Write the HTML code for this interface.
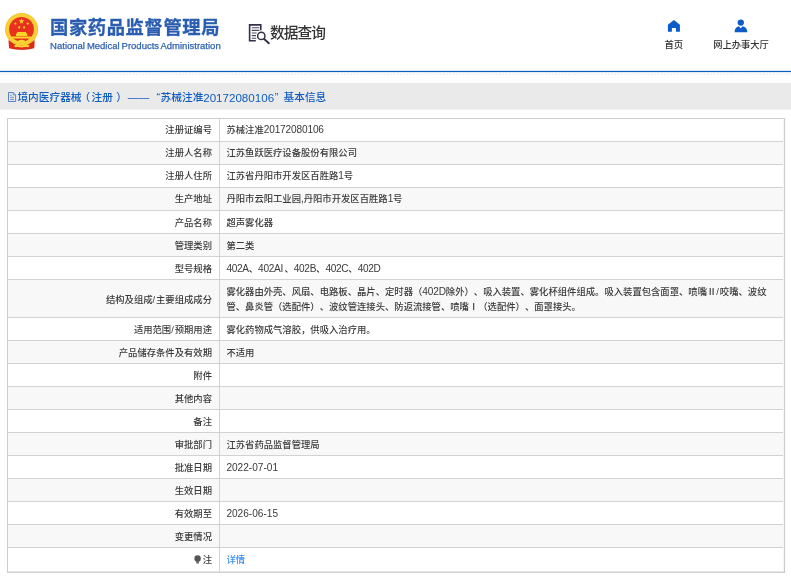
<!DOCTYPE html>
<html lang="zh-CN">
<head>
<meta charset="utf-8">
<title>国家药品监督管理局 数据查询</title>
<style>
html,body{margin:0;padding:0;background:#fff;}
body{width:791px;height:581px;position:relative;overflow:hidden;font-family:"Liberation Sans","Noto Sans CJK SC",sans-serif;color:#3a3a3a;text-spacing-trim:space-all;}
#bg{position:absolute;left:0;top:0;width:791px;height:581px;}
#txt{position:absolute;left:0;top:0;width:791px;height:581px;will-change:transform;opacity:0.999;}
.abs{position:absolute;white-space:nowrap;}
#t1{left:50.1px;top:13.6px;font-size:18.3px;line-height:28px;font-weight:bold;color:#2a5db0;letter-spacing:0.6px;-webkit-text-stroke:0.3px #2a5db0;}
#t2{left:50.1px;top:39.6px;font-size:9.5px;line-height:12px;color:#2f62b3;word-spacing:-0.7px;-webkit-text-stroke:0.25px #2f62b3;}
#q{left:270px;top:22px;font-size:14.7px;letter-spacing:-0.9px;line-height:22px;color:#333;font-weight:500;}
#h1{left:653.8px;width:40px;text-align:center;top:37.8px;font-weight:500;font-size:9.4px;line-height:14px;color:#333;}
#h2{left:700.5px;width:81px;text-align:center;top:37.6px;font-weight:500;font-size:9.25px;line-height:14px;color:#333;}
#tt{left:0;top:83.5px;width:400px;height:27px;line-height:27px;font-size:10.7px;color:#0f5cc2;font-weight:500;}
.tp{position:absolute;top:0;white-space:nowrap;}
.n2{font-size:11.6px;letter-spacing:0px;}
.r,.r2{position:absolute;left:8px;width:776px;font-size:9.34px;font-weight:500;}
.r .l,.r2 .l{position:absolute;left:0;top:0;width:204px;text-align:right;white-space:nowrap;}
.r .v,.r2 .v{position:absolute;left:218.4px;top:0;white-space:nowrap;}
.r .l,.r .v{line-height:22px;height:22px;margin-top:1px;}
.u .l,.u .v{margin-top:0;}
.r2 .l{line-height:37px;margin-top:2px;}
.r2 .v{line-height:15px;top:4px;}
.n{font-size:10.1px;letter-spacing:-0.15px;}
.d{letter-spacing:0px;}
.m{letter-spacing:-0.3px;}
.sl{letter-spacing:0.9px;}
.lnk{color:#3c8cf5;}
</style>
</head>
<body>
<svg id="bg" width="791" height="581" viewBox="0 0 791 581">
<rect x="0" y="70.85" width="791" height="1.25" fill="#0b5ec0"/>
<defs><pattern id="hatch" width="3.3" height="3.3" patternUnits="userSpaceOnUse"><path d="M0.3 3 L2.6 0.7" stroke="#d6d6d6" stroke-width="0.7" fill="none"/></pattern></defs>
<rect x="0" y="72.2" width="791" height="3" fill="url(#hatch)"/>
<rect x="0" y="83" width="791" height="26.2" fill="#eaeaea"/>
<rect x="0" y="109.2" width="791" height="0.9" fill="#eef0f6"/>
<rect x="8" y="142" width="775" height="22" fill="#f8f8f8"/>
<rect x="8" y="188" width="775" height="22" fill="#f8f8f8"/>
<rect x="8" y="234" width="775" height="22" fill="#f8f8f8"/>
<rect x="8" y="280" width="775" height="37" fill="#f8f8f8"/>
<rect x="8" y="341" width="775" height="22" fill="#f8f8f8"/>
<rect x="8" y="387" width="775" height="22" fill="#f8f8f8"/>
<rect x="8" y="433" width="775" height="22" fill="#f8f8f8"/>
<rect x="8" y="479" width="775" height="22" fill="#f8f8f8"/>
<rect x="8" y="525" width="775" height="22" fill="#f8f8f8"/>
<rect x="7" y="118" width="778" height="1" fill="#cdcdcd"/>
<rect x="8" y="141" width="775" height="1" fill="#d2d2d2"/>
<rect x="8" y="164" width="775" height="1" fill="#d2d2d2"/>
<rect x="8" y="187" width="775" height="1" fill="#d2d2d2"/>
<rect x="8" y="210" width="775" height="1" fill="#d2d2d2"/>
<rect x="8" y="233" width="775" height="1" fill="#d2d2d2"/>
<rect x="8" y="256" width="775" height="1" fill="#d2d2d2"/>
<rect x="8" y="279" width="775" height="1" fill="#d2d2d2"/>
<rect x="8" y="317" width="775" height="1" fill="#d2d2d2"/>
<rect x="8" y="340" width="775" height="1" fill="#d2d2d2"/>
<rect x="8" y="363" width="775" height="1" fill="#d2d2d2"/>
<rect x="8" y="386" width="775" height="1" fill="#d2d2d2"/>
<rect x="8" y="409" width="775" height="1" fill="#d2d2d2"/>
<rect x="8" y="432" width="775" height="1" fill="#d2d2d2"/>
<rect x="8" y="455" width="775" height="1" fill="#d2d2d2"/>
<rect x="8" y="478" width="775" height="1" fill="#d2d2d2"/>
<rect x="8" y="501" width="775" height="1" fill="#d2d2d2"/>
<rect x="8" y="524" width="775" height="1" fill="#d2d2d2"/>
<rect x="8" y="547" width="775" height="1" fill="#d2d2d2"/>
<rect x="7" y="571.5" width="778.1" height="1.4" fill="#cdcdcd"/>
<rect x="7" y="118" width="1" height="454.9" fill="#cdcdcd"/>
<rect x="783.8" y="118" width="1.3" height="454.9" fill="#cdcdcd"/>
<rect x="219" y="119" width="1" height="452.5" fill="#d2d2d2"/>
<!-- emblem -->
<g id="emblem">
<path d="M8.5 40 L14 43 Q21.6 46.5 29.4 43 L34.6 40 L34.2 48.2 Q21.6 51.2 9 48.2 Z" fill="#de2a1a"/>
<circle cx="21.6" cy="29.4" r="16.5" fill="#f5c02a"/>
<circle cx="21.6" cy="29.4" r="15.6" fill="#f8cf35"/>
<circle cx="21.5" cy="29.3" r="12.4" fill="#e8321d"/>
<path d="M9 41.5 Q21.6 50 34.2 41.5 L34.2 47 Q21.6 52 9 47 Z" fill="#de2a1a"/>
<path d="M10.5 39 Q21.6 48.4 32.7 39 L31.6 37.8 Q21.6 45.6 11.6 37.8 Z" fill="#f8cf35"/>
<polygon points="21.5,18.2 22.2,20.3 24.4,20.3 22.6,21.6 23.3,23.7 21.5,22.4 19.7,23.7 20.4,21.6 18.6,20.3 20.8,20.3" fill="#f9d52a"/>
<circle cx="15.4" cy="23.6" r="1.05" fill="#f9d52a"/><circle cx="27.7" cy="23.6" r="1.05" fill="#f9d52a"/>
<circle cx="19.2" cy="27.4" r="1.05" fill="#f9d52a"/><circle cx="24.1" cy="27.4" r="1.05" fill="#f9d52a"/>
<path d="M17.4 32 H25.8 L26.6 33.5 H27.3 V36 H16 V33.5 H16.7 Z" fill="#f9d52a"/>
<rect x="11.8" y="36.5" width="19.6" height="2" rx="0.6" fill="#f9d52a"/>
<ellipse cx="21.6" cy="41.4" rx="3.6" ry="1.7" fill="#f8cf35"/>
<path d="M14 45.2 Q17.8 44 21.6 45.6 Q25.4 44 29.6 45.2 L28.6 47.2 Q25 46.4 21.6 47.6 Q18.2 46.4 15 47.2 Z" fill="#f8cf35"/>
</g>
<!-- search doc icon -->
<g id="qicon" fill="none" stroke="#33314a">
<path d="M260.8 30.2 V24.9 H249.6 V40.8 H255.8" stroke-width="1.6"/>
<path d="M251.7 27.7 H259.4 M251.7 30.4 H259.4 M251.7 33 H256.6 M251.7 35.6 H256 M251.7 38.2 H256.2" stroke-width="1.1" stroke="#4a485f"/>
<circle cx="261.3" cy="35.9" r="3.65" stroke-width="1.5" fill="#fff"/>
<path d="M264.2 39 L268.8 43.3" stroke-width="1.9" stroke-linecap="round"/>
</g>
<!-- home icon -->
<path d="M673.9 20.1 L679.9 24.8 V31.8 H676 V28 H671.9 V31.8 H667.9 V24.8 Z" fill="#0b5bc9"/>
<!-- user icon -->
<circle cx="740.8" cy="22.6" r="3.15" fill="#0b5bc9"/>
<path d="M734.6 32.2 Q734.6 27.2 739 26.2 L740.8 28.5 L742.6 26.2 Q747.3 27.2 747.3 32.2 Z" fill="#0b5bc9"/>
<!-- bulb icon -->
<circle cx="197.6" cy="558.5" r="3.2" fill="#555"/>
<path d="M196 560.8 H199.2 L198.8 563.6 H196.4 Z" fill="#666"/>
<!-- title doc icon -->
<g fill="none" stroke="#3f6fcf" stroke-width="0.85">
<path d="M8.5 92.5 H13.2 L15.6 95 V101.5 H8.5 Z"/>
<path d="M13.2 92.5 V95 H15.6" stroke-width="0.6"/>
<path d="M10.2 95.3 H11.8 M10.2 97.3 H14 M10.2 99.4 H14" stroke-width="0.8"/>
</g>
</svg>
<div id="txt">
<div class="abs" id="t1">国家药品监督管理局</div>
<div class="abs" id="t2">National Medical Products Administration</div>
<div class="abs" id="q">数据查询</div>
<div class="abs" id="h1">首页</div>
<div class="abs" id="h2">网上办事大厅</div>
<div class="abs" id="tt"><span class="tp" style="left:17.4px">境内医疗器械</span><span class="tp" style="left:79.5px">（</span><span class="tp" style="left:91.5px">注册</span><span class="tp" style="left:116.2px">）</span><span class="tp" style="left:127.8px">——</span><span class="tp" style="left:156.6px">“</span><span class="tp" style="left:160.6px">苏械注准</span><span class="tp n2" style="left:203.2px">20172080106</span><span class="tp" style="left:274.8px">”</span><span class="tp" style="left:283.5px">基本信息</span></div>
<div class="r u" style="top:119px;height:22px"><div class="l">注册证编号</div><div class="v">苏械注准<span class="n">20172080106</span></div></div>
<div class="r u" style="top:142px;height:22px"><div class="l">注册人名称</div><div class="v">江苏鱼跃医疗设备股份有限公司</div></div>
<div class="r u" style="top:165px;height:22px"><div class="l">注册人住所</div><div class="v">江苏省丹阳市开发区百胜路<span class="n">1</span>号</div></div>
<div class="r u" style="top:188px;height:22px"><div class="l">生产地址</div><div class="v">丹阳市云阳工业园<span class="n">,</span>丹阳市开发区百胜路<span class="n">1</span>号</div></div>
<div class="r" style="top:211px;height:22px"><div class="l">产品名称</div><div class="v">超声雾化器</div></div>
<div class="r" style="top:234px;height:22px"><div class="l">管理类别</div><div class="v">第二类</div></div>
<div class="r" style="top:257px;height:22px"><div class="l">型号规格</div><div class="v"><span class="n m">402A</span>、<span class="n m" style="margin-right:1.4px">402AI</span>、<span class="n m">402B</span>、<span class="n m">402C</span>、<span class="n m">402D</span></div></div>
<div class="r2" style="top:280px;height:37px"><div class="l">结构及组成<span class="sl">/</span>主要组成成分</div><div class="v">雾化器由外壳、风扇、电路板、晶片、定时器（<span class="n">402D</span>除外）、吸入装置、雾化杯组件组成。吸入装置包含面罩、喷嘴Ⅱ<span class="sl">/</span>咬嘴、波纹<br>管、鼻炎管（选配件）、波纹管连接头、防返流接管、喷嘴Ⅰ（选配件）、面罩接头。</div></div>
<div class="r" style="top:318px;height:22px"><div class="l">适用范围<span class="sl">/</span>预期用途</div><div class="v">雾化药物成气溶胶，供吸入治疗用。</div></div>
<div class="r" style="top:341px;height:22px"><div class="l">产品储存条件及有效期</div><div class="v">不适用</div></div>
<div class="r" style="top:364px;height:22px"><div class="l">附件</div><div class="v"></div></div>
<div class="r" style="top:387px;height:22px"><div class="l">其他内容</div><div class="v"></div></div>
<div class="r" style="top:410px;height:22px"><div class="l">备注</div><div class="v"></div></div>
<div class="r" style="top:433px;height:22px"><div class="l">审批部门</div><div class="v">江苏省药品监督管理局</div></div>
<div class="r" style="top:456px;height:22px"><div class="l">批准日期</div><div class="v"><span class="n d">2022-07-01</span></div></div>
<div class="r" style="top:479px;height:22px"><div class="l">生效日期</div><div class="v"></div></div>
<div class="r" style="top:502px;height:22px"><div class="l">有效期至</div><div class="v"><span class="n d">2026-06-15</span></div></div>
<div class="r" style="top:525px;height:22px"><div class="l">变更情况</div><div class="v"></div></div>
<div class="r" style="top:548px;height:23px"><div class="l">注</div><div class="v"><span class="lnk">详情</span></div></div>
</div>
</body>
</html>
